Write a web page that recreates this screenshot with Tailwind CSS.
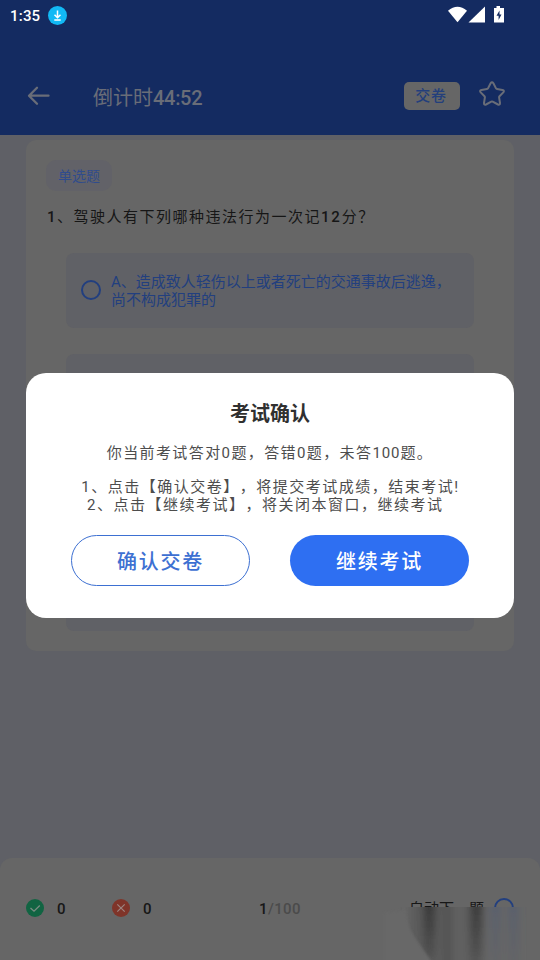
<!DOCTYPE html>
<html lang="zh-CN">
<head>
<meta charset="utf-8">
<title>考试确认</title>
<script src="https://cdn.jsdelivr.net/npm/@tailwindcss/browser@4"></script>
</head>
<body class="relative flex h-[960px] w-[540px] flex-col overflow-hidden bg-[#5f6066] font-['Roboto','Noto_Sans_CJK_SC',sans-serif] [text-spacing-trim:space-all]">
  <header class="h-[135px] shrink-0 bg-[#142b61]">
    <div class="flex h-8 items-center pl-[10px] pr-[35px] text-white">
      <span class="text-[15px] font-medium leading-8 tracking-[0.2px]">1:35</span>
      <svg class="ml-[7px] size-5" viewBox="0 0 20 20"><circle cx="10.500" cy="9.500" r="9.500" fill="#12b9f5"/><path d="M10.500 4.500v7M7.500 8.800l3 3 3-3M7.300 14h6.400" fill="none" stroke="#fff" stroke-width="1.500"/></svg>
      <svg class="mb-[2px] ml-auto h-[18px] w-[57px]" viewBox="0 0 57 18" fill="#fff"><path d="M0 4.700Q9.500-3 19 4.700L9.500 16.300Z"/><path d="M20.500 16.500 37 .500V16.500Z"/><path d="M46 2h2.500V0h3.500v2H56v14.500H46Z"/><path d="M51.500 4.500 48.500 9.800H50.600V14L53.500 8.500H51.500Z" fill="#142b61"/></svg>
    </div>
    <div class="flex h-[128px] items-center pl-[27px] pr-[34px] text-[#696d78]">
      <svg class="h-5 w-6" viewBox="0 0 24 20" fill="none" stroke="currentColor" stroke-width="2.300" stroke-linecap="round" stroke-linejoin="round"><path d="M21.500 9.700H2.200M10 1.700 2 9.700l8 8"/></svg>
      <h1 class="ml-[42px] pt-[3px] text-[20px] leading-6">倒计时<span class="font-medium tracking-[-0.3px]">44:52</span></h1>
      <div class="ml-auto flex h-7 w-14 items-center justify-center rounded-[5px] bg-[#666] pr-[2px] text-[15px] font-medium tracking-[0.8px] text-[#233f7c]">交卷</div>
      <svg class="mb-[5px] ml-[18px] h-7 w-7" viewBox="0 0 28 28" fill="none" stroke="currentColor" stroke-width="2" stroke-linejoin="round"><path d="M12.600 3.200Q14 1.200 15.400 3.200L18 8.400Q18.300 9 19 9.100L24.500 10Q26.800 10.500 25.300 12.400L21.500 16.200Q21 16.700 21.100 17.400L22 23Q22.100 25.300 20 24.500L14.700 21.700Q14 21.400 13.300 21.700L8 24.500Q5.900 25.300 6 23L6.900 17.400Q7 16.700 6.500 16.200L2.700 12.400Q1.200 10.500 3.500 10L9 9.100Q9.700 9 10 8.400Z"/></svg>
    </div>
  </header>

  <main class="mx-[26px] mt-[5px] h-[511px] rounded-[10px] bg-[#666] pl-5 pt-5">
    <div class="flex h-[31px] w-[66px] items-center justify-center rounded-[10px] bg-[#626268] pt-[2px] text-[14px] text-[#304c8c]">单选题</div>
    <p class="ml-px mt-4 text-[15px] leading-5 tracking-[1.5px] text-[#161616]"><span class="font-medium">1</span>、驾驶人有下列哪种违法行为一次记<span class="font-medium tracking-[1.8px]">12</span>分？</p>
    <div class="ml-5 mt-[26px] flex w-[408px] flex-col gap-[26px]">
      <div class="flex h-[75px] items-center rounded-[8px] bg-[#606166] pl-[15px] text-[#223f7f]">
        <div class="mb-[2px] size-5 rounded-full border-2 border-[#223f7f]"></div>
        <p class="ml-[10px] text-[15px] leading-[18px]">A、造成致人轻伤以上或者死亡的交通事故后逃逸，<br>尚不构成犯罪的</p>
      </div>
      <div class="h-[75px] rounded-[8px] bg-[#606166]"></div>
      <div class="h-[75px] rounded-[8px] bg-[#606166]"></div>
      <div class="h-[75px] rounded-[8px] bg-[#606166]"></div>
    </div>
  </main>

  <footer class="relative mt-auto flex h-[102px] shrink-0 items-center rounded-t-[12px] bg-[#666] pl-[26px] text-[15px] font-medium text-[#171717]">
    <svg class="mb-[2px] size-[18px]" viewBox="0 0 18 18"><circle cx="9" cy="9" r="9" fill="#116442"/><path d="M4.500 9 8 12.200 13.800 6.500" fill="none" stroke="#7c8c83" stroke-width="1.300"/></svg>
    <span class="ml-[13px] w-[55px]">0</span>
    <svg class="mb-[2px] size-[18px]" viewBox="0 0 18 18"><circle cx="9" cy="9" r="9" fill="#7f3429"/><path d="m5.300 5.300 7.400 7.400m0-7.400-7.400 7.400" fill="none" stroke="#9c8581" stroke-width="1.200"/></svg>
    <span class="ml-[13px] w-[116px]">0</span>
    <span class="tracking-[0.4px]">1<span class="text-[#4b4b4b]">/100</span></span>
    <span class="ml-auto font-normal">自动下一题</span>
    <div class="mb-[2px] ml-[10px] mr-[26px] size-5 rounded-full border-2 border-[#223f7f]"></div>
    <svg class="absolute bottom-0 right-0 h-[53px] w-[160px]" viewBox="0 0 160 53">
      <defs>
        <filter id="soft" x="-20%" y="-40%" width="140%" height="180%"><feGaussianBlur stdDeviation="4 0.500"/></filter>
        <filter id="edge"><feGaussianBlur stdDeviation="1"/></filter>
        <linearGradient id="ink" x2="0" y2="1"><stop stop-color="#353535"/><stop offset=".5" stop-color="#454545"/><stop offset="1" stop-color="#575757"/></linearGradient>
        <linearGradient id="blue" x2="0" y2="1"><stop stop-color="#535c70"/><stop offset="1" stop-color="#636467"/></linearGradient>
      </defs>
      <path fill="#666" d="M0 0H160V53H0Z"/>
      <g filter="url(#soft)">
        <path d="M30-5h12v50l-12-12Z" fill="#5c5c5c"/>
        <path d="M43-5h13v65h-5l-8-14Z" fill="url(#ink)"/>
        <path d="M56-5h35v65H56Z" fill="#606060"/>
        <path d="M63-5h8v65h-8Z" fill="#505050"/>
        <path d="M90-5h12v65H90Z" fill="url(#ink)"/>
        <path d="M112-5h7v65h-7ZM130-5h7v65h-7Z" fill="url(#blue)"/>
      </g>
      <path d="M4 6 25 3 29 20 34 29 55 60H4Z" fill="#686868" filter="url(#edge)"/>
    </svg>
  </footer>

  <section class="absolute left-[26px] top-[373px] flex h-[245px] w-[488px] flex-col items-center rounded-[20px] bg-white text-[#4d4d4d]">
    <h2 class="mt-7 text-[20px] font-bold leading-[26px] text-[#303030]">考试确认</h2>
    <p class="mt-[17px] text-[15px] leading-[18px] tracking-[1.4px]">你当前考试答对0题，答错0题，未答<span class="tracking-[0.9px]">100</span>题。</p>
    <p class="mt-4 whitespace-pre pl-px text-center text-[15px] leading-[18px] tracking-[1.5px]">1、点击【确认交卷】，将提交考试成绩，结束考试!
2、点击【继续考试】，将关闭本窗口，继续考试  </p>
    <div class="mt-[21px] flex gap-10 text-[20px] font-medium tracking-[1.7px]">
      <button class="h-[51px] w-[179px] rounded-full border-[1.5px] border-[#3d70d2] pt-[3px] text-[#3d70d2]">确认交卷</button>
      <button class="h-[51px] w-[179px] rounded-full bg-[#2e6ff2] pt-[3px] text-white">继续考试</button>
    </div>
  </section>
</body>
</html>
